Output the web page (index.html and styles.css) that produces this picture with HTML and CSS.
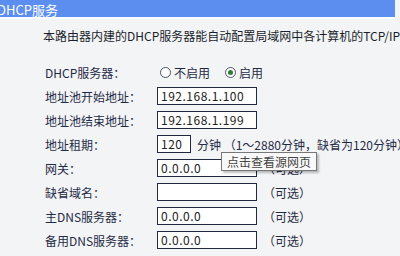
FILE: index.html
```html
<!DOCTYPE html>
<html lang="zh-CN">
<head>
  <meta charset="UTF-8" />
  <title>DHCP服务</title>
  <link rel="stylesheet" href="styles.css">
</head>
<body>
  <div class="page">
    <div class="title">DHCP服务</div>
    <p class="intro">本路由器内建的DHCP服务器能自动配置局域网中各计算机的TCP/IP协议。</p>

    <div class="form">
      <div class="row">
        <span class="label">DHCP服务器：</span>
        <div class="field">
          <label class="radio"><span class="dot"></span>不启用</label>
          <label class="radio"><span class="dot on"></span>启用</label>
        </div>
      </div>
      <div class="row">
        <span class="label">地址池开始地址：</span>
        <div class="field"><span class="box">192.168.1.100</span></div>
      </div>
      <div class="row">
        <span class="label">地址池结束地址：</span>
        <div class="field"><span class="box">192.168.1.199</span></div>
      </div>
      <div class="row">
        <span class="label">地址租期：</span>
        <div class="field">
          <span class="box small">120</span>
          <span class="note">分钟 （1～2880分钟，缺省为120分钟）</span>
        </div>
      </div>
      <div class="row">
        <span class="label">网关：</span>
        <div class="field"><span class="box">0.0.0.0</span><span class="note">（可选）</span></div>
      </div>
      <div class="row">
        <span class="label">缺省域名：</span>
        <div class="field"><span class="box"></span><span class="note">（可选）</span></div>
      </div>
      <div class="row">
        <span class="label">主DNS服务器：</span>
        <div class="field"><span class="box">0.0.0.0</span><span class="note">（可选）</span></div>
      </div>
      <div class="row">
        <span class="label">备用DNS服务器：</span>
        <div class="field"><span class="box">0.0.0.0</span><span class="note">（可选）</span></div>
      </div>
    </div>

    <div class="tooltip">点击查看源网页</div>
  </div>
</body>
</html>
```

FILE: styles.css
```css
* {
  box-sizing: border-box;
}

body {
  margin: 0;
  background: #f3f4f6;
  font-family: "Noto Sans CJK SC", "DejaVu Sans", sans-serif;
  font-size: 12px;
  color: #1f2b45;
}

.page {
  position: relative;
  width: 400px;
  height: 256px;
  overflow: hidden;
}

.title {
  height: 19px;
  width: 395px;
  background: #5b8eef;
  color: #fff;
  font-size: 13px;
  line-height: 19px;
  margin-left: 0;
  text-indent: -3px;
  border-bottom: 2px solid #fbfcfd;
}

.intro {
  margin: 0;
  padding: 8px 0 0 43px;
  white-space: nowrap;
  line-height: 18px;
  color: #1a1f2b;
}

.form {
  padding-top: 15px;
}

.row {
  display: grid;
  grid-template-columns: 112px auto;
  align-items: center;
  height: 24px;
  padding-left: 45px;
}

.field {
  display: flex;
  align-items: center;
  white-space: nowrap;
}

.box {
  display: inline-block;
  width: 100px;
  height: 18px;
  border: 1px solid #202a3e;
  background: #fff;
  padding-left: 3px;
  line-height: 16px;
  color: #222;
  letter-spacing: 0.5px;
}

.box.small {
  width: 34px;
}

.note {
  margin-left: 6px;
  color: #1f2b45;
}

.radio {
  display: flex;
  align-items: center;
  margin-right: 12px;
  margin-left: 3px;
}

.dot {
  width: 11px;
  height: 11px;
  border: 1px solid #4a5568;
  border-radius: 50%;
  background: #fff;
  margin-right: 3px;
  position: relative;
}

.dot.on::after {
  content: "";
  position: absolute;
  left: 2px;
  top: 2px;
  width: 5px;
  height: 5px;
  border-radius: 50%;
  background: #2f7d32;
}

.tooltip {
  position: absolute;
  left: 221px;
  top: 152px;
  padding: 1px 5px;
  background: #f9f9f9;
  border: 1px solid #777;
  color: #444;
  line-height: 15px;
  box-shadow: 2px 2px 2px rgba(0, 0, 0, 0.25);
}
```
